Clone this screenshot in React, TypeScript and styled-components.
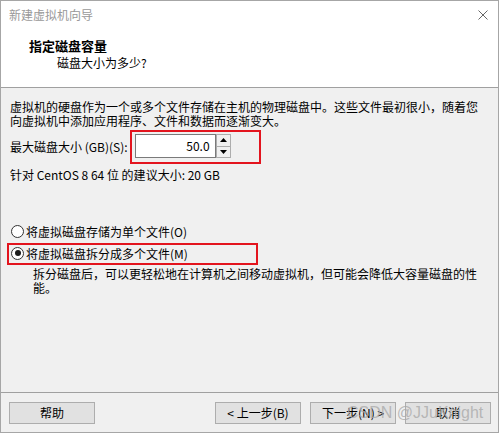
import React from "react";
import styled, { createGlobalStyle } from "styled-components";

const GlobalStyle = createGlobalStyle`
  html, body {
    margin: 0;
    padding: 0;
    background: #ffffff;
  }
  body {
    font-family: "Noto Sans CJK SC", "Microsoft YaHei", "Liberation Sans", sans-serif;
    font-size: 12px;
    color: #000;
  }
`

const Window = styled.div`
  position: relative;
  width: 499px;
  height: 433px;
  box-sizing: border-box;
  border: 1px solid #a6a6a6;
  background: #f0f0f0;
  display: flex;
  flex-direction: column;
`

const Header = styled.div`
  height: 87px;
  box-sizing: border-box;
  background: #ffffff;
  border-bottom: 1px solid #a0a0a0;
`

const TitleBar = styled.div`
  height: 28px;
  display: flex;
  align-items: center;
  justify-content: space-between;
  padding: 0 10px 0 8px;
`

const WindowTitle = styled.span`
  color: #999999;
  font-size: 12px;
  line-height: 14px;
`

const CloseIcon = styled.svg`
  width: 10px;
  height: 10px;
  display: block;
`

const Heading = styled.div`
  margin-top: 9px;
  padding-left: 28px;
  font-size: 13px;
  font-weight: bold;
  line-height: 16px;
`

const Subheading = styled.div`
  margin-top: 2px;
  padding-left: 56px;
  line-height: 14px;
`

const Body = styled.div`
  padding: 12px 9px 0 9px;
`

const Paragraph = styled.p`
  margin: 0;
  line-height: 14px;
  white-space: nowrap;
`

const SizeRow = styled.div`
  margin-top: 2px;
  display: flex;
  align-items: center;
`

const FieldLabel = styled.span`
  line-height: 14px;
  white-space: nowrap;
`

const Highlight = styled.div<{ $pad: string; $shift?: number }>`
  border: 2px solid #e3141e;
  padding: ${(p) => p.$pad};
  margin-left: ${(p) => p.$shift ?? 0}px;
  display: flex;
  align-items: center;
`

const SpinBox = styled.div`
  display: flex;
  height: 24px;
`

const SpinInput = styled.div`
  width: 81px;
  box-sizing: border-box;
  border: 1px solid #7a7a7a;
  background: #ffffff;
  text-align: right;
  padding-right: 5px;
  line-height: 22px;
`

const SpinButtons = styled.div`
  width: 15px;
  display: flex;
  flex-direction: column;
`

const SpinButton = styled.div`
  flex: 1;
  box-sizing: border-box;
  border: 1px solid #adadad;
  background: #f0f0f0;
  display: flex;
  align-items: center;
  justify-content: center;
  & + & {
    border-top: none;
  }
`

const Note = styled.div`
  margin-top: 4px;
  line-height: 14px;
`

const Options = styled.div`
  margin-top: 42px;
  display: flex;
  flex-direction: column;
  gap: 5px;
`

const RadioRow = styled.label`
  display: flex;
  align-items: center;
  gap: 2px;
  height: 14px;
  padding-left: 1px;
`

const RadioDot = styled.span<{ $checked?: boolean }>`
  position: relative;
  width: 13px;
  height: 13px;
  box-sizing: border-box;
  border: 1px solid #333333;
  border-radius: 50%;
  background: #ffffff;
  &::after {
    content: "";
    display: ${(p) => (p.$checked ? "block" : "none")};
    position: absolute;
    left: 2.5px;
    top: 2.5px;
    width: 6px;
    height: 6px;
    border-radius: 50%;
    background: #1a1a1a;
  }
`

const Description = styled.p`
  margin: 2px 0 0 0;
  padding-left: 23px;
  line-height: 14px;
  white-space: nowrap;
`

const Footer = styled.div`
  margin-top: auto;
  border-top: 1px solid #a0a0a0;
  padding: 9px 7px 8px 8px;
  display: flex;
  justify-content: space-between;
`

const ButtonGroup = styled.div`
  display: flex;
  gap: 9px;
`

const Button = styled.button`
  width: 86px;
  height: 22px;
  box-sizing: border-box;
  border: 1px solid #adadad;
  background: #e1e1e1;
  font-family: inherit;
  font-size: 12px;
  color: #000;
  padding: 0;
  line-height: 20px;
`

const Watermark = styled.span`
  position: absolute;
  left: 346px;
  top: 402px;
  font-family: "Liberation Sans", Arial, sans-serif;
  font-size: 16px;
  line-height: 20px;
  color: rgba(170, 170, 170, 0.8);
  pointer-events: none;
  white-space: nowrap;
`

export default function App() {
  return (
    <>
      <GlobalStyle />
      <Window>
        <Header>
          <TitleBar>
            <WindowTitle>新建虚拟机向导</WindowTitle>
            <CloseIcon viewBox="0 0 10 10">
              <path d="M0.5 0.5 L9.5 9.5 M9.5 0.5 L0.5 9.5" stroke="#666" strokeWidth="1" />
            </CloseIcon>
          </TitleBar>
          <Heading>指定磁盘容量</Heading>
          <Subheading>磁盘大小为多少?</Subheading>
        </Header>

        <Body>
          <Paragraph>
            虚拟机的硬盘作为一个或多个文件存储在主机的物理磁盘中。这些文件最初很小，随着您
            <br />
            向虚拟机中添加应用程序、文件和数据而逐渐变大。
          </Paragraph>

          <SizeRow>
            <FieldLabel>最大磁盘大小 (GB)(S):</FieldLabel>
            <Highlight $pad="2px 28px 4px 3px" $shift={2}>
              <SpinBox>
                <SpinInput>50.0</SpinInput>
                <SpinButtons>
                  <SpinButton>
                    <svg width="7" height="4" viewBox="0 0 7 4">
                      <path d="M3.5 0 L7 4 L0 4 Z" fill="#000" />
                    </svg>
                  </SpinButton>
                  <SpinButton>
                    <svg width="7" height="4" viewBox="0 0 7 4">
                      <path d="M0 0 L7 0 L3.5 4 Z" fill="#000" />
                    </svg>
                  </SpinButton>
                </SpinButtons>
              </SpinBox>
            </Highlight>
          </SizeRow>

          <Note>针对 CentOS 8 64 位 的建议大小: 20 GB</Note>

          <Options>
            <RadioRow>
              <RadioDot />
              将虚拟磁盘存储为单个文件(O)
            </RadioRow>
            <Highlight $pad="1px 0 3px 1px" $shift={-3} style={{ width: 251, boxSizing: "border-box" }}>
              <RadioRow>
                <RadioDot $checked />
                将虚拟磁盘拆分成多个文件(M)
              </RadioRow>
            </Highlight>
          </Options>

          <Description>
            拆分磁盘后，可以更轻松地在计算机之间移动虚拟机，但可能会降低大容量磁盘的性
            <br />
            能。
          </Description>
        </Body>

        <Footer>
          <Button>帮助</Button>
          <ButtonGroup>
            <Button>&lt; 上一步(B)</Button>
            <Button>下一步(N) &gt;</Button>
            <Button>取消</Button>
          </ButtonGroup>
        </Footer>
        <Watermark>CSDN @JJuKnight</Watermark>
      </Window>
    </>
  );
}
